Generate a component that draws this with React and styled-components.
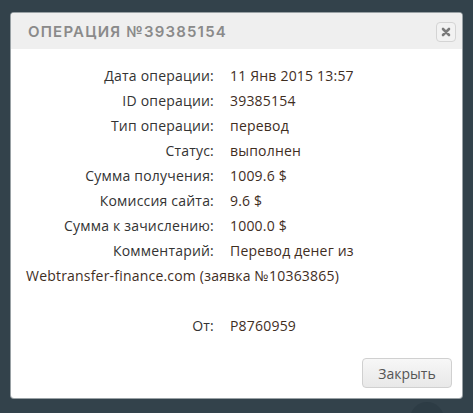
import React from "react";
import styled, { createGlobalStyle } from "styled-components";

const Global = createGlobalStyle`
  html, body { margin: 0; padding: 0; background: #33424b; }
  body { font-family: "Open Sans", Inter, sans-serif; }
`;

const Page = styled.div`
  position: relative;
  width: 473px;
  height: 413px;
  overflow: hidden;
  padding: 13px 11px 0 11px;
  box-sizing: border-box;
`;

const Modal = styled.div`
  width: 451px;
  background: #fff;
  border-radius: 3px;
  box-shadow: 0 0 0 1px rgba(255,255,255,0.5);
  overflow: hidden;
  position: relative;
  z-index: 1;
`;

const Header = styled.div`
  height: 36px;
  background: #efefef;
  display: flex;
  align-items: center;
  justify-content: space-between;
  padding: 0 6px 0 17px;
`;

const Title = styled.div`
  font-family: Inter, sans-serif;
  font-size: 15px;
  font-weight: 600;
  letter-spacing: 1.2px;
  color: #8a8a8a;
  text-transform: uppercase;
  margin-top: 1px;
`;

const CloseX = styled.button`
  width: 20px;
  height: 20px;
  padding: 0;
  border: 1px solid #d4d4d4;
  border-radius: 4px;
  background: #f2f2f2;
  display: flex;
  align-items: center;
  justify-content: center;
  margin-top: 1px;
`;

const Body = styled.div`
  padding: 14px 15px 0 15px;
  font-size: 14px;
  line-height: 25px;
  letter-spacing: 0.2px;
  color: #333;
`;

const Row = styled.div`
  min-height: 25px;
`;

const Label = styled.span`
  display: inline-block;
  width: 188px;
  text-align: right;
  margin-right: 16px;
  color: #333;
`;

const Value = styled.span`
  color: #3f2e1f;
`;

const NoWrap = styled.span`
  white-space: nowrap;
`;

const Footer = styled.div`
  display: flex;
  justify-content: flex-end;
  padding: 20px 10px 10px 10px;
`;

const Button = styled.button`
  width: 90px;
  height: 30px;
  border: 1px solid #d0d0d0;
  border-radius: 4px;
  background: linear-gradient(#f7f7f7, #e8e8e8);
  color: #555;
  font-family: inherit;
  font-size: 14px;
`;

const Circle = styled.div`
  position: absolute;
  left: 410px;
  top: 402px;
  width: 34px;
  height: 34px;
  border-radius: 50%;
  background: #2d3c45;
`;

const rows = [
  ["Дата операции:", "11 Янв 2015 13:57"],
  ["ID операции:", "39385154"],
  ["Тип операции:", "перевод"],
  ["Статус:", "выполнен"],
  ["Сумма получения:", "1009.6 $"],
  ["Комиссия сайта:", "9.6 $"],
  ["Сумма к зачислению:", "1000.0 $"],
];

export default function App() {
  return (
    <>
      <Global />
      <Page>
        <Modal>
          <Header>
            <Title>Операция №39385154</Title>
            <CloseX aria-label="close">
              <svg width="10" height="10" viewBox="0 0 10 10">
                <path d="M2 2 L8 8 M8 2 L2 8" stroke="#7a7a7a" strokeWidth="2.6" strokeLinecap="round" />
              </svg>
            </CloseX>
          </Header>
          <Body>
            {rows.map(([l, v]) => (
              <Row key={l}>
                <Label>{l}</Label>
                <Value>{v}</Value>
              </Row>
            ))}
            <Row>
              <Label>Комментарий:</Label>
              <Value>
                Перевод денег из <NoWrap>Webtransfer-finance.com</NoWrap> (заявка №10363865)
              </Value>
            </Row>
            <Row />
            <Row>
              <Label>От:</Label>
              <Value>P8760959</Value>
            </Row>
          </Body>
          <Footer>
            <Button>Закрыть</Button>
          </Footer>
        </Modal>
        <Circle />
      </Page>
    </>
  );
}
